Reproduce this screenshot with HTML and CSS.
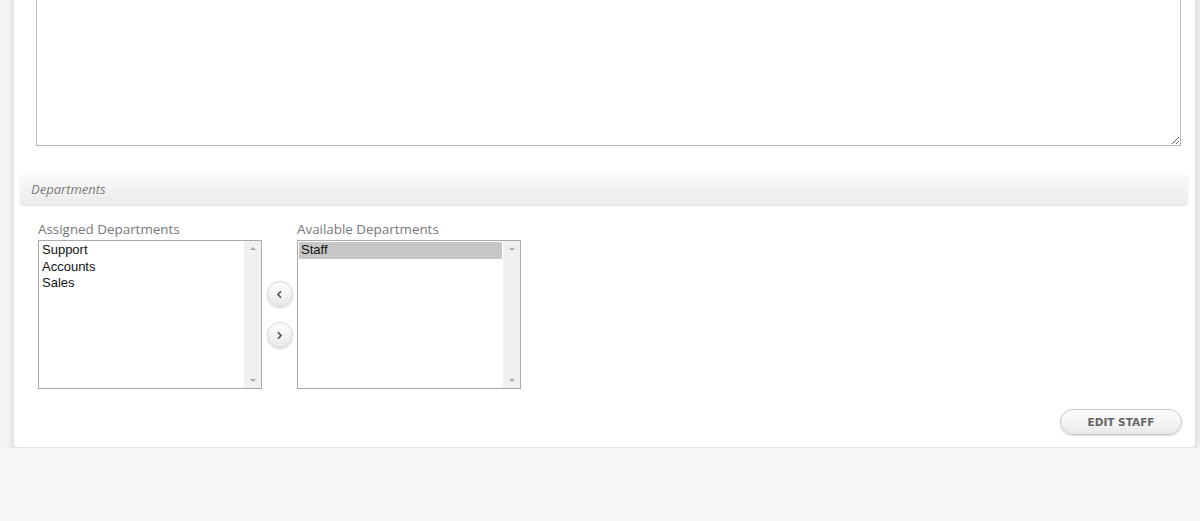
FILE: index.html
```html
<!DOCTYPE html>
<html lang="en">
<head>
    <meta charset="UTF-8">
    <title>Edit Staff</title>
    <link rel="stylesheet" href="styles.css">
</head>
<body>
    <div class="card">
        <textarea class="notes"></textarea>

        <div class="section-head">Departments</div>

        <div class="dept-grid">
            <div class="dept-label">Assigned Departments</div>
            <div></div>
            <div class="dept-label">Available Departments</div>

            <div class="listbox">
                <div class="items">
                    <div class="item">Support</div>
                    <div class="item">Accounts</div>
                    <div class="item">Sales</div>
                </div>
                <div class="scroll"><span class="up"></span><span class="down"></span></div>
            </div>

            <div class="movers">
                <button class="round">
                    <svg width="7" height="9" viewBox="0 0 7 9"><polyline points="5,1.2 2,4.5 5,7.8" fill="none" stroke="#555" stroke-width="1.7"/></svg>
                </button>
                <button class="round">
                    <svg width="7" height="9" viewBox="0 0 7 9"><polyline points="2,1.2 5,4.5 2,7.8" fill="none" stroke="#555" stroke-width="1.7"/></svg>
                </button>
            </div>

            <div class="listbox">
                <div class="items">
                    <div class="item selected">Staff</div>
                </div>
                <div class="scroll"><span class="up"></span><span class="down"></span></div>
            </div>
        </div>

        <div class="actions">
            <button class="pill">EDIT STAFF</button>
        </div>
    </div>
</body>
</html>
```

FILE: styles.css
```css
body {
    margin: 0;
    background-color: #f6f6f6;
    font-family: "Open Sans", Arial, sans-serif;
}
.card {
    margin: -40px 4px 0 13px;
    padding: 20px 0 12px 0;
    background-color: #fff;
    border: 1px solid #e3e3e3;
    border-radius: 0 0 4px 4px;
    box-shadow: 0 5px 9px rgba(0, 0, 0, 0.15);
}
.notes {
    display: block;
    box-sizing: border-box;
    margin: 0 15px 0 22px;
    width: 1145px;
    height: 165px;
    border: 1px solid #b9b9b9;
    background-color: #fff;
    resize: vertical;
    outline: none;
}
.section-head {
    margin: 29px 7px 0 6px;
    height: 30px;
    line-height: 29px;
    padding-left: 11px;
    border-radius: 4px;
    background: linear-gradient(#f9f9f9, #ebebeb);
    box-shadow: 0 1px 2px rgba(0, 0, 0, 0.13);
    color: #7d7d7d;
    font-size: 13px;
    font-style: italic;
}
.dept-grid {
    display: grid;
    grid-template-columns: 224px 35px 224px;
    margin: 16px 0 0 24px;
}
.dept-label {
    font-size: 13.4px;
    line-height: 16px;
    color: #777;
    margin-bottom: 3px;
}
.listbox {
    display: flex;
    height: 149px;
    box-sizing: border-box;
    border: 1px solid #a9a9a9;
    background-color: #fff;
}
.items {
    flex: 1;
    padding: 1px;
}
.item {
    font-family: "Liberation Sans", Arial, sans-serif;
    font-size: 13px;
    line-height: 16.5px;
    padding-left: 2px;
    color: #111;
}
.item.selected {
    background-color: #c6c6c6;
}
.scroll {
    width: 17px;
    background-color: #f0f0f0;
    display: flex;
    flex-direction: column;
    justify-content: space-between;
    align-items: center;
    padding: 6px 0;
}
.up, .down {
    width: 0;
    height: 0;
    border-left: 3px solid transparent;
    border-right: 3px solid transparent;
}
.up {
    border-bottom: 3px solid #a8a8a8;
}
.down {
    border-top: 3px solid #a8a8a8;
}
.movers {
    display: flex;
    flex-direction: column;
    justify-content: center;
    align-items: center;
    gap: 15px;
}
.round {
    width: 26px;
    height: 26px;
    padding: 0;
    border-radius: 50%;
    border: 1px solid #d6d6d6;
    background: linear-gradient(#fff, #e7e7e7);
    box-shadow: 0 1px 2px rgba(0, 0, 0, 0.18);
    display: flex;
    align-items: center;
    justify-content: center;
    cursor: pointer;
}
.actions {
    display: flex;
    justify-content: flex-end;
    margin-top: 20px;
    padding-right: 13px;
}
.pill {
    width: 122px;
    height: 26px;
    border-radius: 13px;
    border: 1px solid #c9c9c9;
    background: linear-gradient(#fefefe, #e9e9e9);
    box-shadow: 0 1px 2px rgba(0, 0, 0, 0.15);
    font-family: "DejaVu Sans", Verdana, sans-serif;
    font-size: 10.5px;
    font-weight: bold;
    color: #666;
    letter-spacing: 0;
    cursor: pointer;
}
```
